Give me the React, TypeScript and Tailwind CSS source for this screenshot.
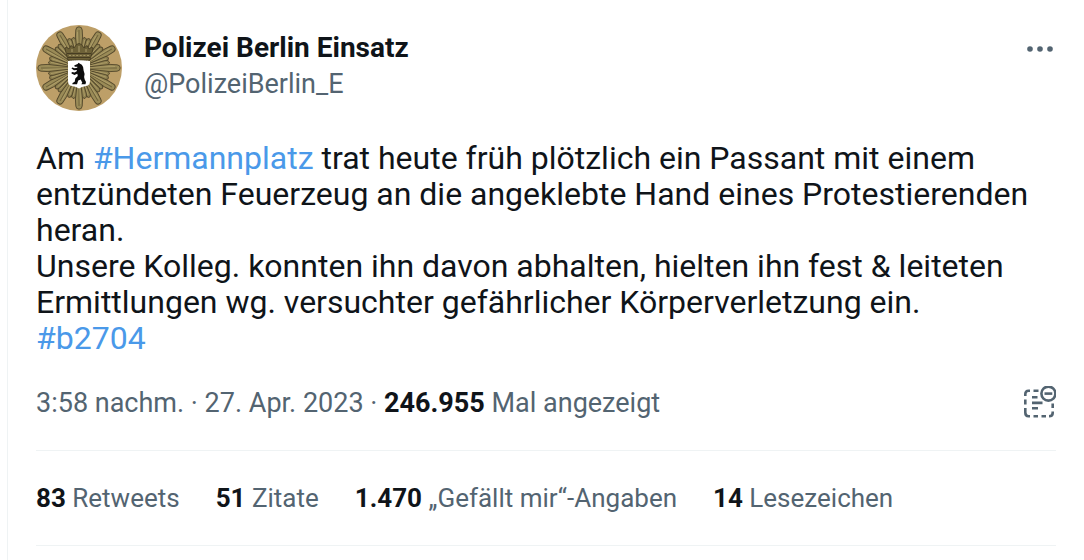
interface StatProps {
  value: string;
  label: string;
}

const stats: StatProps[] = [
  { value: "83", label: "Retweets" },
  { value: "51", label: "Zitate" },
  { value: "1.470", label: "„Gefällt mir“-Angaben" },
  { value: "14", label: "Lesezeichen" },
];

const rays = Array.from({ length: 12 }, (_, i) => i * 30);

const PoliceStar = () => (
  <svg viewBox="0 0 86 86" className="size-[86px] shrink-0" role="img" aria-label="Polizei Berlin Einsatz">
    <circle cx="43" cy="43" r="43" fill="#bd9f68" />
    <circle cx="43" cy="43" r="25" fill="#74663a" />
    {/* outer strips of each ray, stepped like a fan */}
    {rays.map((deg) => (
      <g key={deg} transform={`rotate(${deg} 43 43)`}>
        <path
          d="M43 43 L35.6 17 Q34.8 13.4 37 12.6 Q38.6 12.2 39.3 14 L46.7 14 Q47.4 12.2 49 12.6 Q51.2 13.4 50.4 17 Z"
          fill="#8f8150"
          stroke="#51462a"
          strokeWidth="0.9"
        />
        <path d="M43 43 L37.4 15 M43 43 L48.6 15" stroke="#b3a26c" strokeWidth="0.7" />
      </g>
    ))}
    {/* centre strips */}
    {rays.map((deg) => (
      <g key={deg} transform={`rotate(${deg} 43 43)`}>
        <path
          d="M43 43 L39.4 12 L39.8 5 Q40 1.8 43 1.8 Q46 1.8 46.2 5 L46.6 12 Z"
          fill="#9a8b57"
          stroke="#51462a"
          strokeWidth="0.9"
        />
        <path d="M43 40 V5" stroke="#665a35" strokeWidth="0.8" />
        <path d="M43 40 L41.5 7" stroke="#b9a872" strokeWidth="0.6" />
      </g>
    ))}
    {/* crown */}
    <path
      d="M32 35 L29 24 L30 22 L33 24 L35 20.5 L38 23 L40.5 19.5 L43 18.5 L45.5 19.5 L48 23 L51 20.5 L53 24 L56 22 L57 24 L54 35 Z"
      fill="#6e6238"
      stroke="#443a21"
      strokeWidth="0.8"
    />
    <path d="M31 28.5 H55 M32 32.5 H54" stroke="#463c22" strokeWidth="1" />
    <path d="M33 30.5 H53" stroke="#a39465" strokeWidth="1.2" strokeDasharray="2 1.6" />
    <path d="M36 24 V27 M43 21 V27 M50 24 V27" stroke="#a39465" strokeWidth="1.2" />
    {/* shield with the bear */}
    <path d="M32 36 Q43 34.5 54 36 V56 Q54 60.5 50 61 Q45.5 61.5 43 63.5 Q40.5 61.5 36 61 Q32 60.5 32 56 Z" fill="#fff" />
    <path
      d="M39.8 39.7 L41.6 39 L42.6 37.7 L44 38.8 L45.8 39.8 L47.1 42 L47.6 45.5 L48.6 49 L48.1 52 L48.7 54.5 L50 57 L49.5 59.3 L45.3 59.3 L46.3 57.7 L44.7 54.5 L42.2 55.5 L41 59.3 L36.3 59.3 L36.6 57.9 L38.7 56.8 L39.3 53.5 L41.8 51 L41.3 48.7 L38.5 50 L35.5 48.6 L35.8 47 L38.6 47.4 L41 46.1 L40.6 44.9 L38 45.2 L35.5 43.5 L36.2 42.5 L38.8 43.2 L41.2 42.7 L41.4 41.8 L38.8 41.7 L38.2 40.6 Z"
      fill="#0c0c0c"
    />
  </svg>
);

const NoteIcon = () => (
  <svg viewBox="0 0 34 34" className="size-[34px]" fill="none" stroke="#536471" strokeWidth="2.6" aria-hidden="true">
    <path d="M3.3 10V8Q3.3 4.8 6.5 4.8H8M11.5 4.8H16.5M3.3 13.5V18.5M3.3 22V26.5Q3.3 30.2 6.5 30.2H8M11.5 30.2H16M19.5 30.2H24M27 30.2Q30.7 30.2 30.7 27V25.5M30.7 17.5V22" />
    <path d="M10 11.3H15.5M10 16.9H20.5M10 22.3H16" />
    <circle cx="26.4" cy="7.6" r="7" />
    <path d="M22.5 7.6H30.3" />
  </svg>
);

const Stat = ({ value, label }: StatProps) => (
  <a href="#stats" className="whitespace-nowrap">
    <span className="font-bold text-[#0f1419]">{value}</span> {label}
  </a>
);

export default function App() {
  return (
    <main className="min-h-screen bg-white pl-[7px] font-[Roboto,sans-serif] text-[#0f1419]">
      <article className="border-l border-[#eff3f4] pt-[25px] pr-7 pb-3.5 pl-7">
        <header className="flex items-start">
          <PoliceStar />
          <div className="ml-[22px] pt-[5px] leading-9">
            <h1 className="text-[28px] leading-9 font-bold">Polizei Berlin Einsatz</h1>
            <a href="#profile" className="block text-[27px] leading-9 text-[#536471]">@PolizeiBerlin_E</a>
          </div>
          <button type="button" aria-label="Mehr" className="mt-2 ml-auto flex h-8 items-center">
            <svg viewBox="0 0 30 8" className="h-2 w-[30px]" fill="#536471" aria-hidden="true">
              <circle cx="4" cy="4" r="2.8" />
              <circle cx="14" cy="4" r="2.8" />
              <circle cx="24" cy="4" r="2.8" />
            </svg>
          </button>
        </header>

        <p className="mt-[29px] text-[32px] leading-9">
          Am <a href="#Hermannplatz" className="text-[#4a99e9]">#Hermannplatz</a> trat heute früh plötzlich ein Passant mit einem
          entzündeten Feuerzeug an die angeklebte Hand eines Protestierenden heran.
          <br />
          Unsere Kolleg. konnten ihn davon abhalten, hielten ihn fest &amp; leiteten Ermittlungen wg. versuchter gefährlicher
          Körperverletzung ein.
          <br />
          <a href="#b2704" className="text-[#4a99e9]">#b2704</a>
        </p>

        <div className="mt-[29px] flex items-center justify-between text-[27px] leading-9 text-[#536471]">
          <p>
            <a href="#status">3:58 nachm. · 27. Apr. 2023</a> · <span className="font-bold text-[#0f1419]">246.955</span> Mal angezeigt
          </p>
          <button type="button" aria-label="Hinweis">
            <NoteIcon />
          </button>
        </div>

        <div className="mt-[29px] flex gap-9 border-y border-[#eff3f4] py-[29px] text-[26px] leading-9 text-[#536471]">
          {stats.map((stat) => (
            <Stat key={stat.label} {...stat} />
          ))}
        </div>
      </article>
    </main>
  );
}
